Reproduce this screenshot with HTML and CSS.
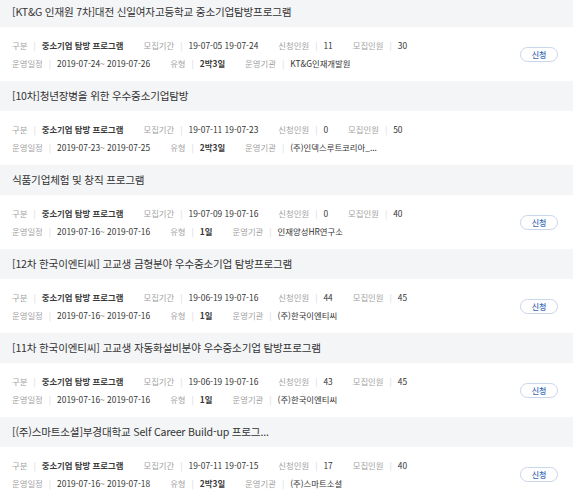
FILE: index.html
```html
<!DOCTYPE html>
<html lang="ko">
<head>
<meta charset="utf-8">
<link rel="stylesheet" href="styles.css">
</head>
<body>
<div class="list">
  <div class="item">
    <div class="head">[KT&amp;G 인재원 7차]대전 신일여자고등학교 중소기업탐방프로그램</div>
    <div class="body">
      <div class="meta">
        <div class="line"><span class="lb">구분</span><span class="bar">|</span><b class="v">중소기업 탐방 프로그램</b><span class="lb">모집기간</span><span class="bar">|</span><span class="v">19-07-05 19-07-24</span><span class="lb">신청인원</span><span class="bar">|</span><span class="v">11</span><span class="lb">모집인원</span><span class="bar">|</span><span class="v">30</span></div>
        <div class="line"><span class="lb">운영일정</span><span class="bar">|</span><span class="v">2019-07-24~ 2019-07-26</span><span class="lb">유형</span><span class="bar">|</span><b class="v">2박3일</b><span class="lb">운영기관</span><span class="bar">|</span><span class="v">KT&amp;G인재개발원</span></div>
      </div>
      <button class="apply">신청</button>
    </div>
  </div>
  <div class="item">
    <div class="head">[10차]청년장병을 위한 우수중소기업탐방</div>
    <div class="body">
      <div class="meta">
        <div class="line"><span class="lb">구분</span><span class="bar">|</span><b class="v">중소기업 탐방 프로그램</b><span class="lb">모집기간</span><span class="bar">|</span><span class="v">19-07-11 19-07-23</span><span class="lb">신청인원</span><span class="bar">|</span><span class="v">0</span><span class="lb">모집인원</span><span class="bar">|</span><span class="v">50</span></div>
        <div class="line"><span class="lb">운영일정</span><span class="bar">|</span><span class="v">2019-07-23~ 2019-07-25</span><span class="lb">유형</span><span class="bar">|</span><b class="v">2박3일</b><span class="lb">운영기관</span><span class="bar">|</span><span class="v">(주)인덱스루트코리아_...</span></div>
      </div>
    </div>
  </div>
  <div class="item">
    <div class="head">식품기업체험 및 창직 프로그램</div>
    <div class="body">
      <div class="meta">
        <div class="line"><span class="lb">구분</span><span class="bar">|</span><b class="v">중소기업 탐방 프로그램</b><span class="lb">모집기간</span><span class="bar">|</span><span class="v">19-07-09 19-07-16</span><span class="lb">신청인원</span><span class="bar">|</span><span class="v">0</span><span class="lb">모집인원</span><span class="bar">|</span><span class="v">40</span></div>
        <div class="line"><span class="lb">운영일정</span><span class="bar">|</span><span class="v">2019-07-16~ 2019-07-16</span><span class="lb">유형</span><span class="bar">|</span><b class="v">1일</b><span class="lb">운영기관</span><span class="bar">|</span><span class="v">인재양성HR연구소</span></div>
      </div>
      <button class="apply">신청</button>
    </div>
  </div>
  <div class="item">
    <div class="head">[12차 한국이엔티씨] 고교생 금형분야 우수중소기업 탐방프로그램</div>
    <div class="body">
      <div class="meta">
        <div class="line"><span class="lb">구분</span><span class="bar">|</span><b class="v">중소기업 탐방 프로그램</b><span class="lb">모집기간</span><span class="bar">|</span><span class="v">19-06-19 19-07-16</span><span class="lb">신청인원</span><span class="bar">|</span><span class="v">44</span><span class="lb">모집인원</span><span class="bar">|</span><span class="v">45</span></div>
        <div class="line"><span class="lb">운영일정</span><span class="bar">|</span><span class="v">2019-07-16~ 2019-07-16</span><span class="lb">유형</span><span class="bar">|</span><b class="v">1일</b><span class="lb">운영기관</span><span class="bar">|</span><span class="v">(주)한국이엔티씨</span></div>
      </div>
      <button class="apply">신청</button>
    </div>
  </div>
  <div class="item">
    <div class="head">[11차 한국이엔티씨] 고교생 자동화설비분야 우수중소기업 탐방프로그램</div>
    <div class="body">
      <div class="meta">
        <div class="line"><span class="lb">구분</span><span class="bar">|</span><b class="v">중소기업 탐방 프로그램</b><span class="lb">모집기간</span><span class="bar">|</span><span class="v">19-06-19 19-07-16</span><span class="lb">신청인원</span><span class="bar">|</span><span class="v">43</span><span class="lb">모집인원</span><span class="bar">|</span><span class="v">45</span></div>
        <div class="line"><span class="lb">운영일정</span><span class="bar">|</span><span class="v">2019-07-16~ 2019-07-16</span><span class="lb">유형</span><span class="bar">|</span><b class="v">1일</b><span class="lb">운영기관</span><span class="bar">|</span><span class="v">(주)한국이엔티씨</span></div>
      </div>
      <button class="apply">신청</button>
    </div>
  </div>
  <div class="item">
    <div class="head">[(주)스마트소셜]부경대학교 Self Career Build-up 프로그...</div>
    <div class="body">
      <div class="meta">
        <div class="line"><span class="lb">구분</span><span class="bar">|</span><b class="v">중소기업 탐방 프로그램</b><span class="lb">모집기간</span><span class="bar">|</span><span class="v">19-07-11 19-07-15</span><span class="lb">신청인원</span><span class="bar">|</span><span class="v">17</span><span class="lb">모집인원</span><span class="bar">|</span><span class="v">40</span></div>
        <div class="line"><span class="lb">운영일정</span><span class="bar">|</span><span class="v">2019-07-16~ 2019-07-18</span><span class="lb">유형</span><span class="bar">|</span><b class="v">2박3일</b><span class="lb">운영기관</span><span class="bar">|</span><span class="v">(주)스마트소셜</span></div>
      </div>
      <button class="apply">신청</button>
    </div>
  </div>
</div>
</body>
</html>
```

FILE: styles.css
```css
html, body {
  margin: 0;
  padding: 0;
  background: #fff;
}
body {
  font-family: "Noto Sans CJK KR", "Noto Sans", sans-serif;
  color: #333;
}
.list {
  width: 573px;
  margin-top: -3px;
}
.head {
  height: 30px;
  line-height: 30px;
  background: #f4f5f7;
  padding: 0 12px;
  font-size: 10.6px;
  letter-spacing: -0.2px;
  color: #333;
  white-space: nowrap;
  overflow: hidden;
}
.body {
  height: 54px;
  box-sizing: border-box;
  padding: 9px 15px 9px 12px;
  display: flex;
  align-items: center;
  justify-content: space-between;
}
.meta {
  display: flex;
  flex-direction: column;
}
.line {
  height: 18px;
  line-height: 18px;
  font-size: 8.4px;
  white-space: nowrap;
  display: flex;
  align-items: center;
}
.lb {
  color: #a3a3a3;
}
.bar {
  color: #d6d6d6;
  margin: 0 6px;
}
.v {
  color: #333;
  margin-right: 20px;
  font-weight: 400;
}
b.v {
  font-weight: 700;
  color: #3a3a3a;
}
.apply {
  width: 38px;
  height: 15px;
  padding: 0;
  border: 1px solid #c9d5e8;
  border-radius: 8px;
  background: #fff;
  color: #3b6bb5;
  font-family: inherit;
  font-size: 8px;
  font-weight: 500;
  line-height: 13px;
}
```
